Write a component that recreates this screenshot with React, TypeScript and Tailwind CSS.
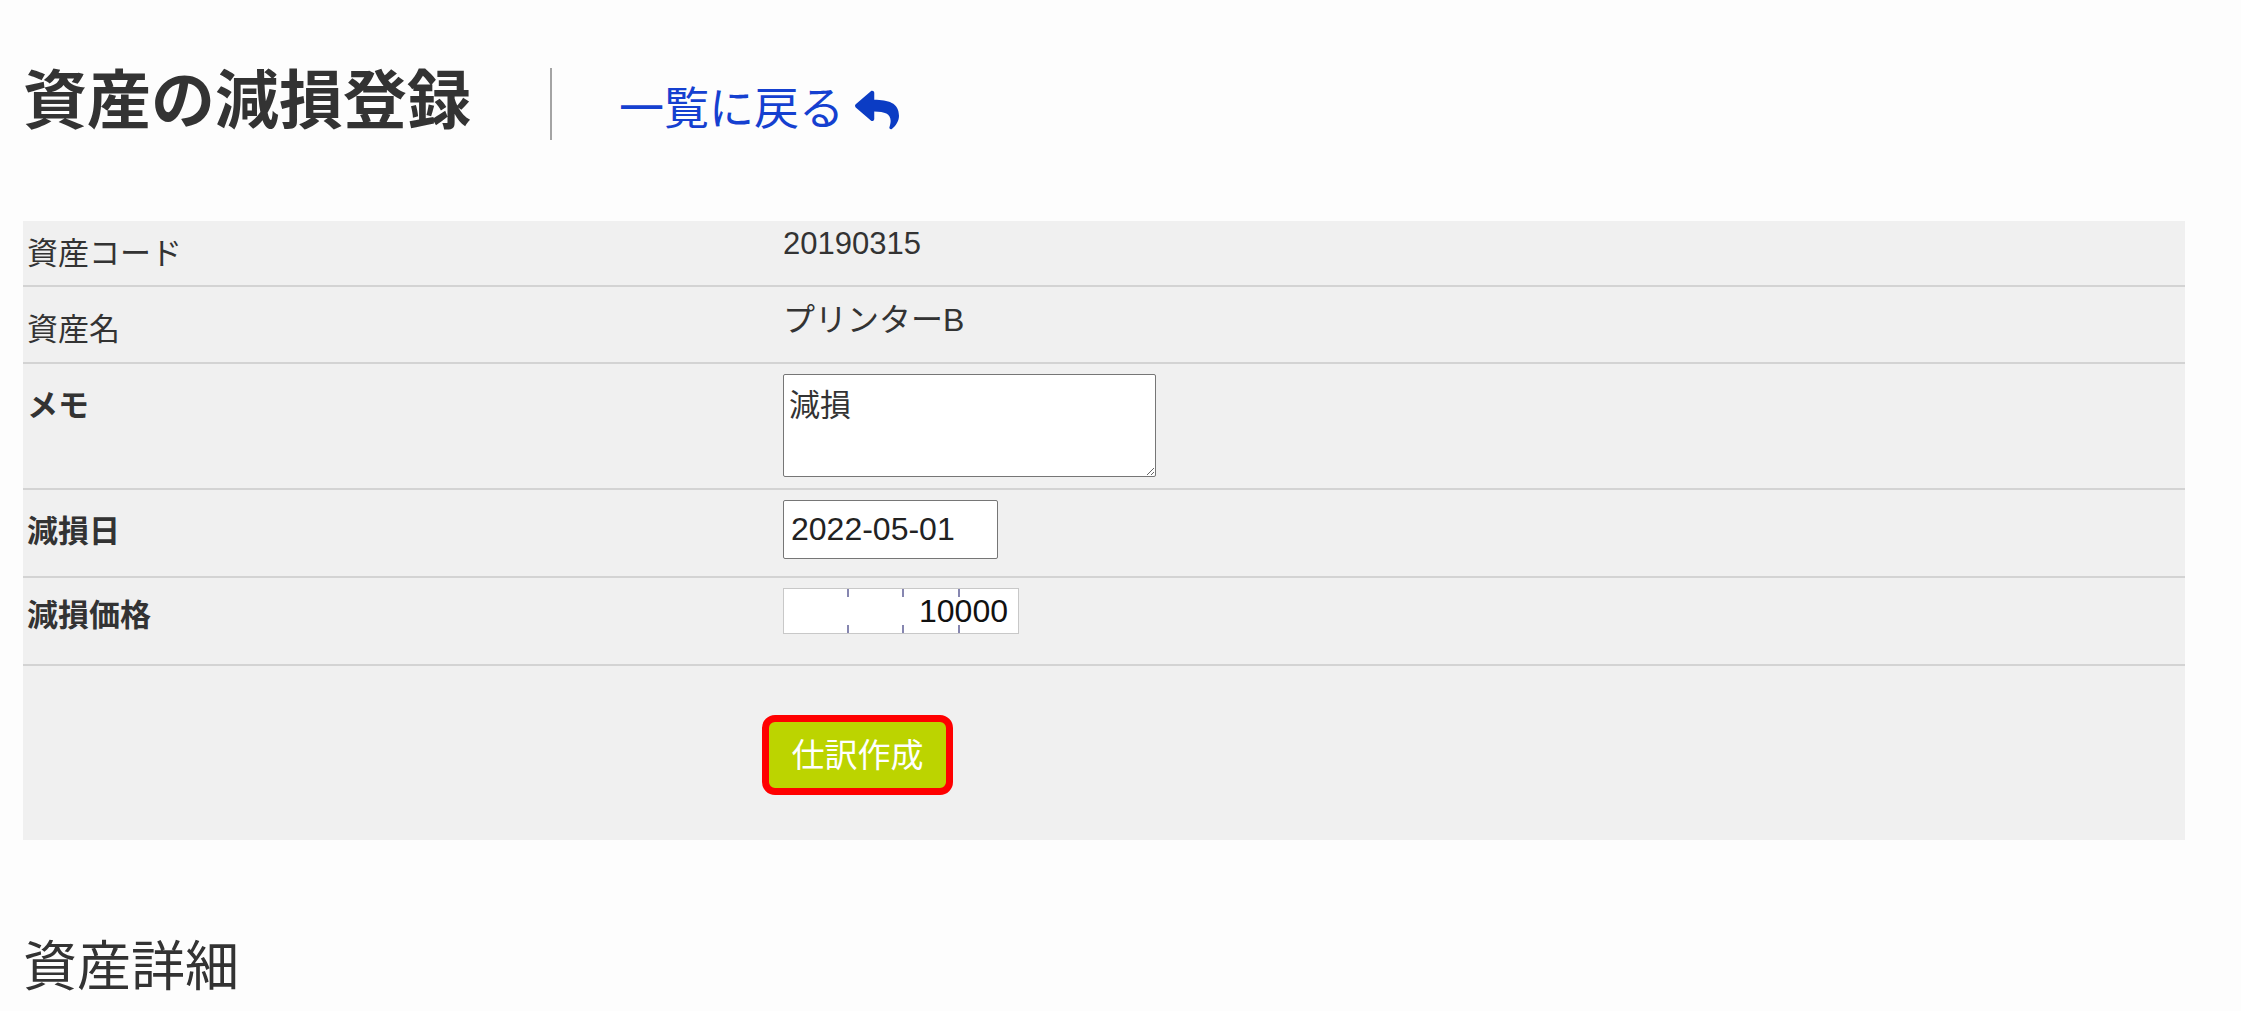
import React from 'react';
import { FaReply } from 'react-icons/fa';

function Tick({ left }: { left: string }) {
  return (
    <>
      <span className={`absolute top-[1px] h-[8px] w-[2px] bg-[#8686b0] ${left}`} />
      <span className={`absolute bottom-[1px] h-[8px] w-[2px] bg-[#8686b0] ${left}`} />
    </>
  );
}

export default function App() {
  return (
    <div className="min-h-screen bg-[#fdfdfd] font-[family-name:Liberation_Sans,Noto_Sans_CJK_JP,sans-serif] text-[#333]">
      {/* header */}
      <div className="flex items-center pl-[23px] pt-[62px]">
        <h1 className="text-[64px] font-bold leading-[76px]">資産の減損登録</h1>
        <div className="ml-[79px] mt-[6px] h-[72px] w-[2px] bg-[#a4a4a4]" />
        <a href="#" className="ml-[67px] mt-[18px] flex items-center text-[45px] leading-[58px] text-[#1540d0]">
          一覧に戻る
          <FaReply className="ml-[11px] text-[#0b3cc4]" size={44} />
        </a>
      </div>

      {/* form panel */}
      <div className="ml-[23px] mt-[81px] w-[2162px] bg-[#f0f0f0] text-[31px]">
        <div className="flex h-[66px] border-b-2 border-[#d3d3d3]">
          <div className="w-[760px] pl-[4px] pt-[11px] leading-[44px]">資産コード</div>
          <div className="pt-[1px] leading-[44px]">20190315</div>
        </div>
        <div className="flex h-[77px] border-b-2 border-[#d3d3d3]">
          <div className="w-[760px] pl-[4px] pt-[21px] leading-[44px]">資産名</div>
          <div className="pt-[11px] text-[32px] leading-[44px]">プリンターB</div>
        </div>
        <div className="flex h-[126px] border-b-2 border-[#d3d3d3]">
          <div className="w-[760px] pl-[4px] pt-[20px] font-bold leading-[44px]">メモ</div>
          <div className="pt-[10px]">
            <textarea
              readOnly
              defaultValue="減損"
              className="block h-[103px] w-[373px] resize border border-[#767676] rounded-[2px] bg-white px-[5px] py-[9px] leading-[44px] text-[#333] outline-none"
            />
          </div>
        </div>
        <div className="flex h-[88px] border-b-2 border-[#d3d3d3]">
          <div className="w-[760px] pl-[4px] pt-[20px] font-bold leading-[44px]">減損日</div>
          <div className="pt-[10px]">
            <input
              readOnly
              type="text"
              value="2022-05-01"
              className="block h-[59px] w-[215px] border border-[#767676] rounded-[2px] bg-white px-[7px] text-[32px] text-[#222] outline-none"
            />
          </div>
        </div>
        <div className="flex h-[88px] border-b-2 border-[#d3d3d3]">
          <div className="w-[760px] pl-[4px] pt-[16px] font-bold leading-[44px]">減損価格</div>
          <div className="pt-[10px]">
            <div className="relative h-[46px] w-[236px]">
              <input
                readOnly
                type="text"
                value="10000"
                className="block h-full w-full border border-[#c8c8c8] bg-white pr-[10px] text-right text-[32px] text-[#111] outline-none"
              />
              <Tick left="left-[64px]" />
              <Tick left="left-[119px]" />
              <Tick left="left-[175px]" />
            </div>
          </div>
        </div>
        <div className="flex h-[174px]">
          <div className="w-[739px]" />
          <div className="pt-[49px]">
            <button className="h-[80px] w-[191px] rounded-[13px] border-[7px] border-[#ff0000] bg-[#bcd400] text-[33px] leading-none text-white">
              仕訳作成
            </button>
          </div>
        </div>
      </div>

      <h2 className="mt-[92px] pl-[23px] text-[54px] font-normal leading-[70px]">資産詳細</h2>
    </div>
  );
}
